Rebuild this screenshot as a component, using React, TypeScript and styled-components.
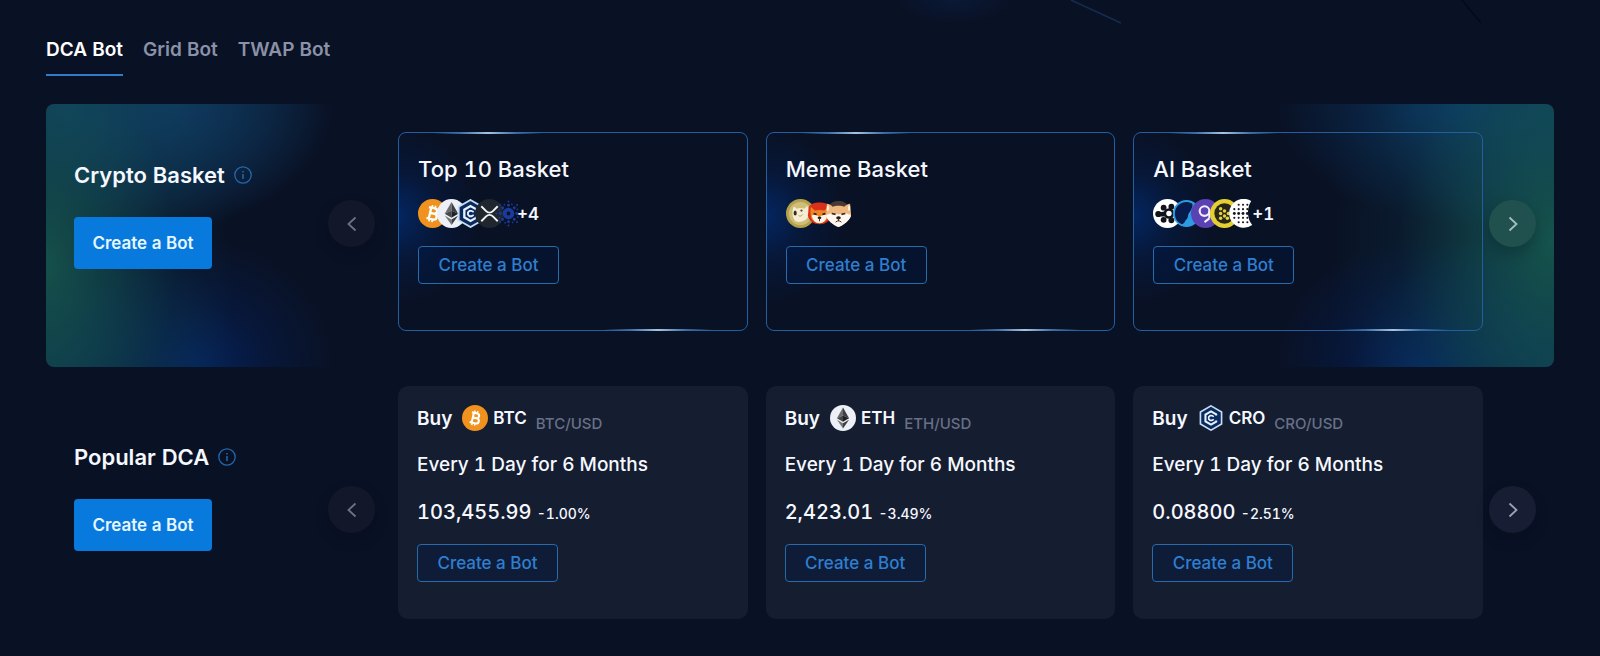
import React, { useId, useState } from "react";
import styled, { createGlobalStyle } from "styled-components";

const GlobalStyle = createGlobalStyle`
  *, *::before, *::after { box-sizing: border-box; }
  body {
    margin: 0;
    min-height: 100vh;
    background: #091124;
    color: #f5f8ff;
    font-family: Inter, "Liberation Sans", sans-serif;
    font-variant-numeric: tabular-nums;
  }
  button { font: inherit; cursor: pointer; }
  h2, h3, p { margin: 0; }
`;

const Page = styled.main`
  position: relative;
  padding: 34px 46px 36px;
`;

const Backdrop = styled.svg`
  position: absolute;
  top: 0;
  left: 50%;
  width: 50%;
  height: 24px;
  pointer-events: none;
`;

const Tabs = styled.div`
  display: flex;
  gap: 20px;
  margin-bottom: 28px;
`;

const Tab = styled.button<{ $active: boolean }>`
  padding: 2px 0 10px;
  height: 42px;
  border: 0;
  border-bottom: 2px solid ${(p) => (p.$active ? "#2f7cc9" : "transparent")};
  background: none;
  color: ${(p) => (p.$active ? "#ffffff" : "#8b92a8")};
  font-size: 19px;
  font-weight: 600;
  line-height: 28px;
`;

const Row = styled.section<{ $glow?: boolean }>`
  display: grid;
  grid-template-columns: 256px 96px minmax(0, 1fr) 71px;
  align-items: start;
  padding: ${(p) => (p.$glow ? "28px 0 36px" : "0")};
  margin-bottom: 19px;
  border-radius: 8px;
  background: ${(p) =>
    p.$glow
      ? `radial-gradient(ellipse 190px 300px at 0 60%, rgba(24, 94, 82, 0.8), rgba(19, 82, 84, 0.55) 35%, rgba(14, 62, 78, 0.2) 68%, transparent),
         radial-gradient(ellipse 230px 290px at 100% 52%, rgba(24, 94, 82, 0.85), rgba(19, 82, 84, 0.6) 35%, rgba(14, 62, 78, 0.2) 68%, transparent),
         radial-gradient(ellipse 260px 150px at 20px 0, rgba(18, 76, 104, 0.8), rgba(16, 66, 98, 0.45) 50%, transparent),
         radial-gradient(ellipse 180px 150px at 100% 0, rgba(18, 76, 98, 0.75), rgba(16, 66, 92, 0.4) 50%, transparent),
         radial-gradient(ellipse 200px 140px at 0 100%, rgba(14, 66, 90, 0.6), transparent),
         radial-gradient(ellipse 200px 150px at 100% 100%, rgba(14, 70, 94, 0.7), transparent),
         radial-gradient(ellipse 160px 120px at 130px 0, rgba(16, 62, 112, 0.7), rgba(14, 54, 98, 0.5) 45%, transparent),
         radial-gradient(ellipse 190px 120px at calc(100% - 90px) 0, rgba(10, 68, 124, 0.8), rgba(11, 56, 102, 0.5) 45%, transparent),
         radial-gradient(ellipse 140px 130px at 150px 100%, rgba(4, 34, 96, 0.9), rgba(6, 30, 80, 0.5) 50%, transparent),
         radial-gradient(ellipse 150px 130px at calc(100% - 130px) 100%, rgba(4, 34, 100, 0.9), rgba(6, 30, 82, 0.5) 50%, transparent),
         #091124`
      : "none"};
`;

const Intro = styled.div<{ $top: number }>`
  padding: ${(p) => p.$top}px 0 0 28px;
`;

const IntroTitle = styled.h2`
  display: flex;
  align-items: center;
  gap: 9px;
  margin-bottom: 28px;
  font-size: 22px;
  font-weight: 600;
  line-height: 28px;
  white-space: nowrap;
`;

const InfoButton = styled.button`
  display: flex;
  padding: 0;
  border: 0;
  background: none;
  color: #2468ae;
`;

const PrimaryButton = styled.button`
  width: 138px;
  height: 52px;
  padding: 0;
  border: 0;
  border-radius: 4px;
  background: #0879dd;
  color: #e6f6ff;
  font-size: 17px;
  font-weight: 600;
`;

const Arrow = styled.button<{ $dim?: boolean; $top: number; $tint?: boolean }>`
  display: grid;
  place-items: center;
  width: 47px;
  height: 47px;
  margin: ${(p) => p.$top}px 0 0 ${(p) => (p.$dim ? 26 : 6)}px;
  padding: 0;
  border: 0;
  border-radius: 50%;
  background: ${(p) => (p.$tint ? "#21514f" : p.$dim ? "#12182a" : "#171d32")};
  color: ${(p) => (p.$tint ? "#a3bfc2" : p.$dim ? "#6d7284" : "#9ba2b5")};
  box-shadow: 0 6px 14px rgba(4, 10, 24, 0.22);
`;

const Cards = styled.div`
  display: grid;
  grid-template-columns: repeat(3, minmax(0, 1fr));
  gap: 18px;
`;

const BasketCard = styled.article`
  position: relative;
  height: 199px;
  padding: 22px 19px;
  border: 1px solid #235f9f;
  border-radius: 8px;
  background: radial-gradient(ellipse 80px 90px at 0 42%, rgba(2, 44, 116, 0.75), rgba(3, 34, 90, 0.35) 50%, transparent);

  &::before,
  &::after {
    content: "";
    position: absolute;
    width: 110px;
    height: 2px;
    background: linear-gradient(90deg, transparent, #3b6ea6 25%, #a9c4e2 50%, #3b6ea6 75%, transparent);
  }
  &::before { top: -1px; left: 34px; }
  &::after { bottom: -1px; right: 34px; }
`;

const BasketTitle = styled.h3`
  font-size: 22px;
  font-weight: 500;
  line-height: 28px;
`;

const Coins = styled.div`
  display: flex;
  align-items: center;
  height: 29px;
  margin: 16px 0 18px;
  font-size: 17px;
  font-weight: 600;

  svg { flex: none; }
  svg + svg { margin-left: -10px; }
`;

const More = styled.span`
  margin-left: -6px;
`;

const OutlineButton = styled.button`
  display: block;
  width: 141px;
  height: 38px;
  padding: 0;
  border: 1px solid #266bab;
  border-radius: 4px;
  background: rgba(0, 28, 72, 0.3);
  color: #2f7fd0;
  font-size: 17px;
  font-weight: 500;
`;

const DcaCard = styled.article`
  height: 233px;
  padding: 19px 19px;
  border-radius: 10px;
  background: #151d31;
`;

const BuyLine = styled.h3`
  display: flex;
  align-items: center;
  height: 26px;
  font-size: 19px;
  font-weight: 600;
`;

const Symbol = styled.span`
  display: flex;
  align-items: center;
  gap: 5px;
  margin: 0 9px 0 10px;
  font-size: 17px;
`;

const Pair = styled.small`
  padding-top: 11px;
  color: #697087;
  font-size: 15px;
  font-weight: 500;
`;

const Schedule = styled.p`
  margin-top: 20px;
  font-size: 19px;
  font-weight: 500;
  line-height: 28px;
`;

const Price = styled.p`
  margin: 19px 0 16px;
  font-size: 20px;
  font-weight: 500;
  line-height: 28px;
`;

const Change = styled.span`
  font-size: 14px;
`;

type CoinProps = { size?: number };

function Coin({ size = 29, children }: CoinProps & { children: React.ReactNode }) {
  return (
    <svg width={size} height={size} viewBox="0 0 30 30" aria-hidden="true">
      {children}
    </svg>
  );
}

const Btc = ({ size }: CoinProps) => (
  <Coin size={size}>
    <circle cx="15" cy="15" r="15" fill="#f0921d" />
    <g transform="rotate(13 15 15)" fill="none" stroke="#fff" strokeWidth="2.4">
      <path d="M10 9.3h6.3a2.8 2.8 0 0 1 0 5.6h-4h4.8a3 3 0 0 1 0 6H10M12.4 9.3v11.6" />
      <path d="M13.2 6.5v3M16.4 6.5v3M13.2 20.8v3M16.4 20.8v3" strokeWidth="1.7" />
    </g>
  </Coin>
);

const Eth = ({ size }: CoinProps) => (
  <Coin size={size}>
    <circle cx="15" cy="15" r="15" fill="#edf0f7" />
    <path d="M15 3 8 15.2l7-3z" fill="#6c6d70" />
    <path d="m15 3 7 12.2-7-3z" fill="#3f4043" />
    <path d="m8 15.2 7-3v7.2z" fill="#454649" />
    <path d="m22 15.2-7-3v7.2z" fill="#202124" />
    <path d="m8 17 7 4.2V27z" fill="#77787b" />
    <path d="m22 17-7 4.2V27z" fill="#3c3d40" />
  </Coin>
);

const Cro = ({ size }: CoinProps) => (
  <Coin size={size}>
    <path d="M15 1 27.2 8v14L15 29 2.8 22V8z" fill="#082a5e" stroke="#c8dcf6" strokeWidth="1.9" />
    <path d="M21 12v-1.3L15 7.3 8.6 11v8l6.4 3.700 6-3.400V18" fill="none" stroke="#e7f1ff" strokeWidth="2.4" />
    <path d="M18.3 13.4 16 12.2h-2l-1.600 1.600v2.400l1.600 1.600h2l2.300-1.200" fill="none" stroke="#e7f1ff" strokeWidth="1.9" />
  </Coin>
);

const Xrp = () => (
  <Coin>
    <circle cx="15" cy="15" r="15" fill="#20262d" />
    <path d="m6.5 7.500 5 5a5 5 0 0 0 7 0l5-5M6.500 23l5-5a5 5 0 0 1 7 0l5 5" fill="none" stroke="#f2f4f6" strokeWidth="2" />
  </Coin>
);

const Ada = () => (
  <Coin>
    <g fill="#1a3a9c">
      <circle cx="15" cy="15" r="4" fill="none" stroke="#1a3a9c" strokeWidth="4" />
      {[0, 45, 90, 135, 180, 225, 270, 315].map((a) => (
        <g key={a} transform={`rotate(${a} 15 15)`}>
          <circle cx="15" cy="6.5" r="1.5" />
          <circle cx="15" cy="2.5" r="1" />
          <circle cx="18.5" cy="5.5" r="0.9" />
        </g>
      ))}
    </g>
  </Coin>
);

const Doge = () => (
  <Coin>
    <circle cx="15" cy="15" r="15" fill="#b5a14b" />
    <circle cx="15" cy="15" r="12" fill="#cfbe78" />
    <path d="M8 8c1 0 2 1 3 2 3-1 6-1 8 0l3-3c2 4 2 10 0 13-2 3-9 5-12 3-4-3-4-11-2-15z" fill="#f5ecd2" />
    <ellipse cx="9.5" cy="14.5" rx="1.6" ry="2.6" fill="#332c20" />
    <circle cx="16" cy="12" r="1.2" fill="#574a2c" />
    <path d="M13 17c1 1 3 1 4-1" fill="none" stroke="#b29a62" />
  </Coin>
);

const Shib = () => (
  <Coin>
    <path d="M4 8c3-6 19-6 22 0l1 9c-1 6-6 9-12 9S4 23 3 17z" fill="#d9301a" />
    <path d="m6 8 4 4c3-1 7-1 10 0l4-4c1 6 0 12-2 14-4 4-10 4-14 0-2-2-3-8-2-14z" fill="#ef8428" />
    <path d="M7 17c3-1 5 0 8 1 3-1 5-2 8-1-1 5-4 8-8 8s-7-3-8-8z" fill="#fff4e8" />
    <path d="m9 15 3 1M21 15l-3 1" stroke="#34150c" strokeWidth="1.7" />
    <ellipse cx="15" cy="19.5" rx="1.9" ry="1.4" fill="#2b1710" />
    <path d="M15 20v3" stroke="#5b2a1c" />
  </Coin>
);

const Floki = () => (
  <Coin>
    <path d="M5 8C7 0 23 0 25 8z" fill="#493a31" />
    <path d="M3 5c2 0 5 2 6 3 3-1.500 9-1.500 12 0 1-1 4-3 6-3l1 11c0 5-8 11-13 13C10 27 2 21 2 16z" fill="#eeb87e" />
    <path d="M2 17c4-3 8-2 13-1 5-1 9-2 13 1-1 5-8 10-13 12C10 27 3 22 2 17z" fill="#fff8f1" />
    <path d="M4 7v5M26 7v5" stroke="#fff4e8" strokeWidth="2" />
    <path d="m8 15 4 1M22 15l-4 1" stroke="#3b2921" strokeWidth="1.8" />
    <ellipse cx="15" cy="19.5" rx="2.4" ry="1.7" fill="#241914" />
    <path d="M12 24c2-2 4-2 6 0M15 20v3" fill="none" stroke="#45332c" />
  </Coin>
);

const Flower = () => (
  <Coin>
    <circle cx="15" cy="15" r="15" fill="#fff" />
    <g fill="#11141a">
      <circle cx="16.5" cy="15" r="5.5" />
      <circle cx="11" cy="9" r="3" />
      <circle cx="19" cy="8" r="3" />
      <circle cx="5.5" cy="15.5" r="3.2" />
      <circle cx="11" cy="21.5" r="3" />
      <circle cx="19" cy="22" r="3" />
      <path d="M5 14l7-1v5H6z" />
    </g>
    <circle cx="16.5" cy="15" r="2.8" fill="#fff" />
  </Coin>
);

const Swirl = () => (
  <Coin>
    <circle cx="15" cy="15" r="14" fill="#2d9be2" />
    <path d="M21 5C14 0 3 5 3 15c0 6 3 9 7 11 3 0 3-3 5-5 2-1 1-5 3-7 2-3 4-6 3-9z" fill="#071b4c" />
  </Coin>
);

const Loop = () => (
  <Coin>
    <circle cx="15" cy="15" r="15" fill="#5a42b5" />
    <circle cx="14" cy="12.5" r="5" fill="none" stroke="#f5eeff" strokeWidth="2.2" />
    <path d="M19 13v7M19 20l-5 4" fill="none" stroke="#f5eeff" strokeWidth="2.2" />
  </Coin>
);

const Cluster = () => (
  <Coin>
    <circle cx="15" cy="15" r="15" fill="#e6cf31" />
    <circle cx="15" cy="15" r="10.5" fill="#26251c" />
    <g fill="#e8d23a">
      {[[11, 10], [15, 12.5], [11, 15], [19, 15], [15, 17.5], [11, 20], [18, 20]].map(([x, y]) => (
        <circle key={`${x}-${y}`} cx={x} cy={y} r="1.8" />
      ))}
    </g>
  </Coin>
);

const DotGrid = () => (
  <Coin>
    <path d="M23 2A15 15 0 1 0 24 27a22 22 0 0 1-1-25z" fill="#fff" />
    <g fill="#15181f">
      {[5.5, 10, 14.5, 19].map((x, i) =>
        [6, 10.5, 15, 19.5, 24].map((y, j) =>
          i === 0 && (j === 0 || j === 4) ? null : <circle key={`${x}-${y}`} cx={x} cy={y} r={j === 2 ? 1.5 : 1.1} />
        )
      )}
    </g>
  </Coin>
);

const InfoIcon = () => (
  <svg width="18" height="18" viewBox="0 0 18 18" fill="none" stroke="currentColor" aria-hidden="true">
    <circle cx="9" cy="9" r="8.2" strokeWidth="1.3" />
    <path d="M9 8v5M9 5v1.500" strokeWidth="1.5" />
  </svg>
);

const Chevron = ({ right }: { right?: boolean }) => (
  <svg width="10" height="16" viewBox="0 0 10 16" fill="none" stroke="currentColor" strokeWidth="1.8" aria-hidden="true">
    <path d={right ? "m1.500 1.500 7 6.500-7 6.500" : "m8.500 1.500-7 6.500 7 6.500"} />
  </svg>
);

const baskets = [
  { name: "Top 10 Basket", coins: [Btc, Eth, Cro, Xrp, Ada], more: "+4" },
  { name: "Meme Basket", coins: [Doge, Shib, Floki], more: "" },
  { name: "AI Basket", coins: [Flower, Swirl, Loop, Cluster, DotGrid], more: "+1" },
];

const plans = [
  { symbol: "BTC", Icon: Btc, price: "103,455.99", change: "-1.00%" },
  { symbol: "ETH", Icon: Eth, price: "2,423.01", change: "-3.49%" },
  { symbol: "CRO", Icon: Cro, price: "0.08800", change: "-2.51%" },
];

function IntroBlock({ title, top }: { title: string; top: number }) {
  const id = useId();
  return (
    <Intro $top={top}>
      <IntroTitle>
        <span id={id}>{title}</span>
        <InfoButton aria-label={`About ${title}`}>
          <InfoIcon />
        </InfoButton>
      </IntroTitle>
      <PrimaryButton aria-describedby={id}>Create a Bot</PrimaryButton>
    </Intro>
  );
}

export default function App() {
  const [active, setActive] = useState("DCA Bot");
  return (
    <>
      <GlobalStyle />
      <Page>
        <Backdrop aria-hidden="true">
          <defs>
            <radialGradient id="haze">
              <stop offset="0" stopColor="#0a1936" />
              <stop offset="1" stopColor="#0a1936" stopOpacity="0" />
            </radialGradient>
          </defs>
          <ellipse cx="154" cy="0" rx="60" ry="24" fill="url(#haze)" />
          <path d="M271 0 321 23" stroke="#152c50" strokeWidth="1.5" />
          <path d="M662 0 681 23" stroke="#040a19" strokeWidth="1.5" />
        </Backdrop>

        <Tabs role="tablist">
          {["DCA Bot", "Grid Bot", "TWAP Bot"].map((name) => (
            <Tab key={name} role="tab" aria-selected={active === name} $active={active === name} onClick={() => setActive(name)}>
              {name}
            </Tab>
          ))}
        </Tabs>

        <Row $glow>
          <IntroBlock title="Crypto Basket" top={29} />
          <Arrow $dim $top={68} aria-label="Previous baskets">
            <Chevron />
          </Arrow>
          <Cards>
            {baskets.map((b) => (
              <BasketCard key={b.name}>
                <BasketTitle>{b.name}</BasketTitle>
                <Coins>
                  {b.coins.map((C, i) => (
                    <C key={i} />
                  ))}
                  {b.more && <More>{b.more}</More>}
                </Coins>
                <OutlineButton>Create a Bot</OutlineButton>
              </BasketCard>
            ))}
          </Cards>
          <Arrow $tint $top={68} aria-label="Next baskets">
            <Chevron right />
          </Arrow>
        </Row>

        <Row>
          <IntroBlock title="Popular DCA" top={57} />
          <Arrow $dim $top={100} aria-label="Previous plans">
            <Chevron />
          </Arrow>
          <Cards>
            {plans.map(({ symbol, Icon, price, change }) => (
              <DcaCard key={symbol}>
                <BuyLine>
                  Buy
                  <Symbol>
                    <Icon size={26} />
                    {symbol}
                  </Symbol>
                  <Pair>{symbol}/USD</Pair>
                </BuyLine>
                <Schedule>Every 1 Day for 6 Months</Schedule>
                <Price>
                  {price} <Change>{change}</Change>
                </Price>
                <OutlineButton>Create a Bot</OutlineButton>
              </DcaCard>
            ))}
          </Cards>
          <Arrow $top={100} aria-label="Next plans">
            <Chevron right />
          </Arrow>
        </Row>
      </Page>
    </>
  );
}
